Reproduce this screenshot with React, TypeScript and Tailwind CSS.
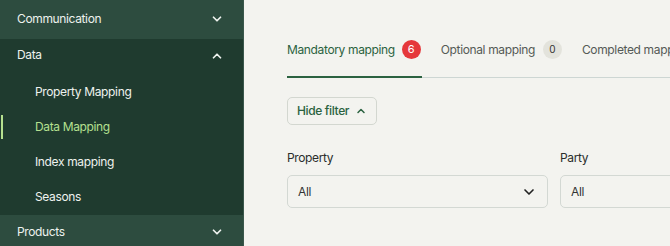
import { ChevronDown, ChevronUp } from "lucide-react";

const font = { fontFamily: "Inter, 'Noto Sans', sans-serif" };

function SubItem({ label, active }: { label: string; active?: boolean }) {
  return (
    <div className="relative h-[35px] flex items-center pl-[35px]">
      {active && <span className="absolute left-[1px] top-[6px] bottom-[5px] w-[2px] bg-[#b5e08f]" />}
      <span className={active ? "text-[#b5e08f]" : "text-[#eef2ee]"}>{label}</span>
    </div>
  );
}

export default function App() {
  return (
    <div className="w-[670px] h-[246px] flex overflow-hidden bg-[#f3f3ef] text-[12px] tracking-[-0.03em]" style={font}>
      <aside className="w-[244px] shrink-0 flex flex-col bg-[#1f3b2f] border-r border-[#3a574b]">
        <div className="h-[39px] shrink-0 flex items-center justify-between pl-[17px] pr-[19px] bg-[#2d4c3f] text-[#eef2ee]">
          <span className="-mt-[2px]">Communication</span>
          <ChevronDown size={14} strokeWidth={3} className="-mt-[2px]" />
        </div>
        <div className="h-[34px] shrink-0 flex items-center justify-between pl-[17px] pr-[19px] text-[#eef2ee]">
          <span className="-mt-[2px]">Data</span>
          <ChevronUp size={14} strokeWidth={3} />
        </div>
        <div className="pt-[1px] pb-[1px]">
          <SubItem label="Property Mapping" />
          <SubItem label="Data Mapping" active />
          <SubItem label="Index mapping" />
          <SubItem label="Seasons" />
        </div>
        <div className="h-[34px] shrink-0 flex items-center justify-between pl-[17px] pr-[19px] bg-[#2d4c3f] text-[#eef2ee]">
          <span className="-mt-[1px]">Products</span>
          <ChevronDown size={14} strokeWidth={3} />
        </div>
      </aside>
      <main className="flex-1 pl-[43px] pt-[40px] overflow-hidden">
        <div className="flex items-end border-b border-[#cdd6d3] w-[500px]">
          <div className="flex items-center gap-[7px] pb-[17px] border-b-2 border-[#2b6240] -mb-[1px] pr-[1px] text-[#2b6240]">
            <span>Mandatory mapping</span>
            <span className="w-[19px] h-[19px] rounded-full bg-[#e5383b] text-white text-[11px] flex items-center justify-center tracking-normal">6</span>
          </div>
          <div className="flex items-center gap-[8px] pb-[18px] pl-[19px] text-[#555a56]">
            <span>Optional mapping</span>
            <span className="w-[19px] h-[19px] rounded-full bg-[#e3e3dc] text-[#333] text-[10px] flex items-center justify-center tracking-normal">0</span>
          </div>
          <div className="flex items-center pb-[18px] pl-[20px] text-[#555a56] whitespace-nowrap">
            <span className="h-[19px] flex items-center">Completed mapping</span>
          </div>
        </div>
        <button className="mt-[19px] h-[28px] px-[9px] flex items-center gap-[6px] rounded-[5px] border border-[#d3d7d0] bg-[#f3f3ef] text-[#2b6240] font-medium">
          <span>Hide filter</span>
          <ChevronUp size={12} strokeWidth={3} />
        </button>
        <div className="flex gap-[12px] mt-[24px]">
          <div className="w-[261px] shrink-0">
            <div className="text-[#2a2d2b] mb-[8px]">Property</div>
            <div className="h-[33px] rounded-[5px] border border-[#d3d8d3] flex items-center justify-between pl-[10px] pr-[10px] text-[#333]">
              <span>All</span>
              <ChevronDown size={16} strokeWidth={2.5} className="text-[#222]" />
            </div>
          </div>
          <div className="w-[261px] shrink-0">
            <div className="text-[#2a2d2b] mb-[8px]">Party</div>
            <div className="h-[33px] rounded-[5px] border border-[#d3d8d3] flex items-center justify-between pl-[10px] pr-[10px] text-[#333]">
              <span>All</span>
              <ChevronDown size={16} strokeWidth={2.5} className="text-[#222]" />
            </div>
          </div>
        </div>
      </main>
    </div>
  );
}
